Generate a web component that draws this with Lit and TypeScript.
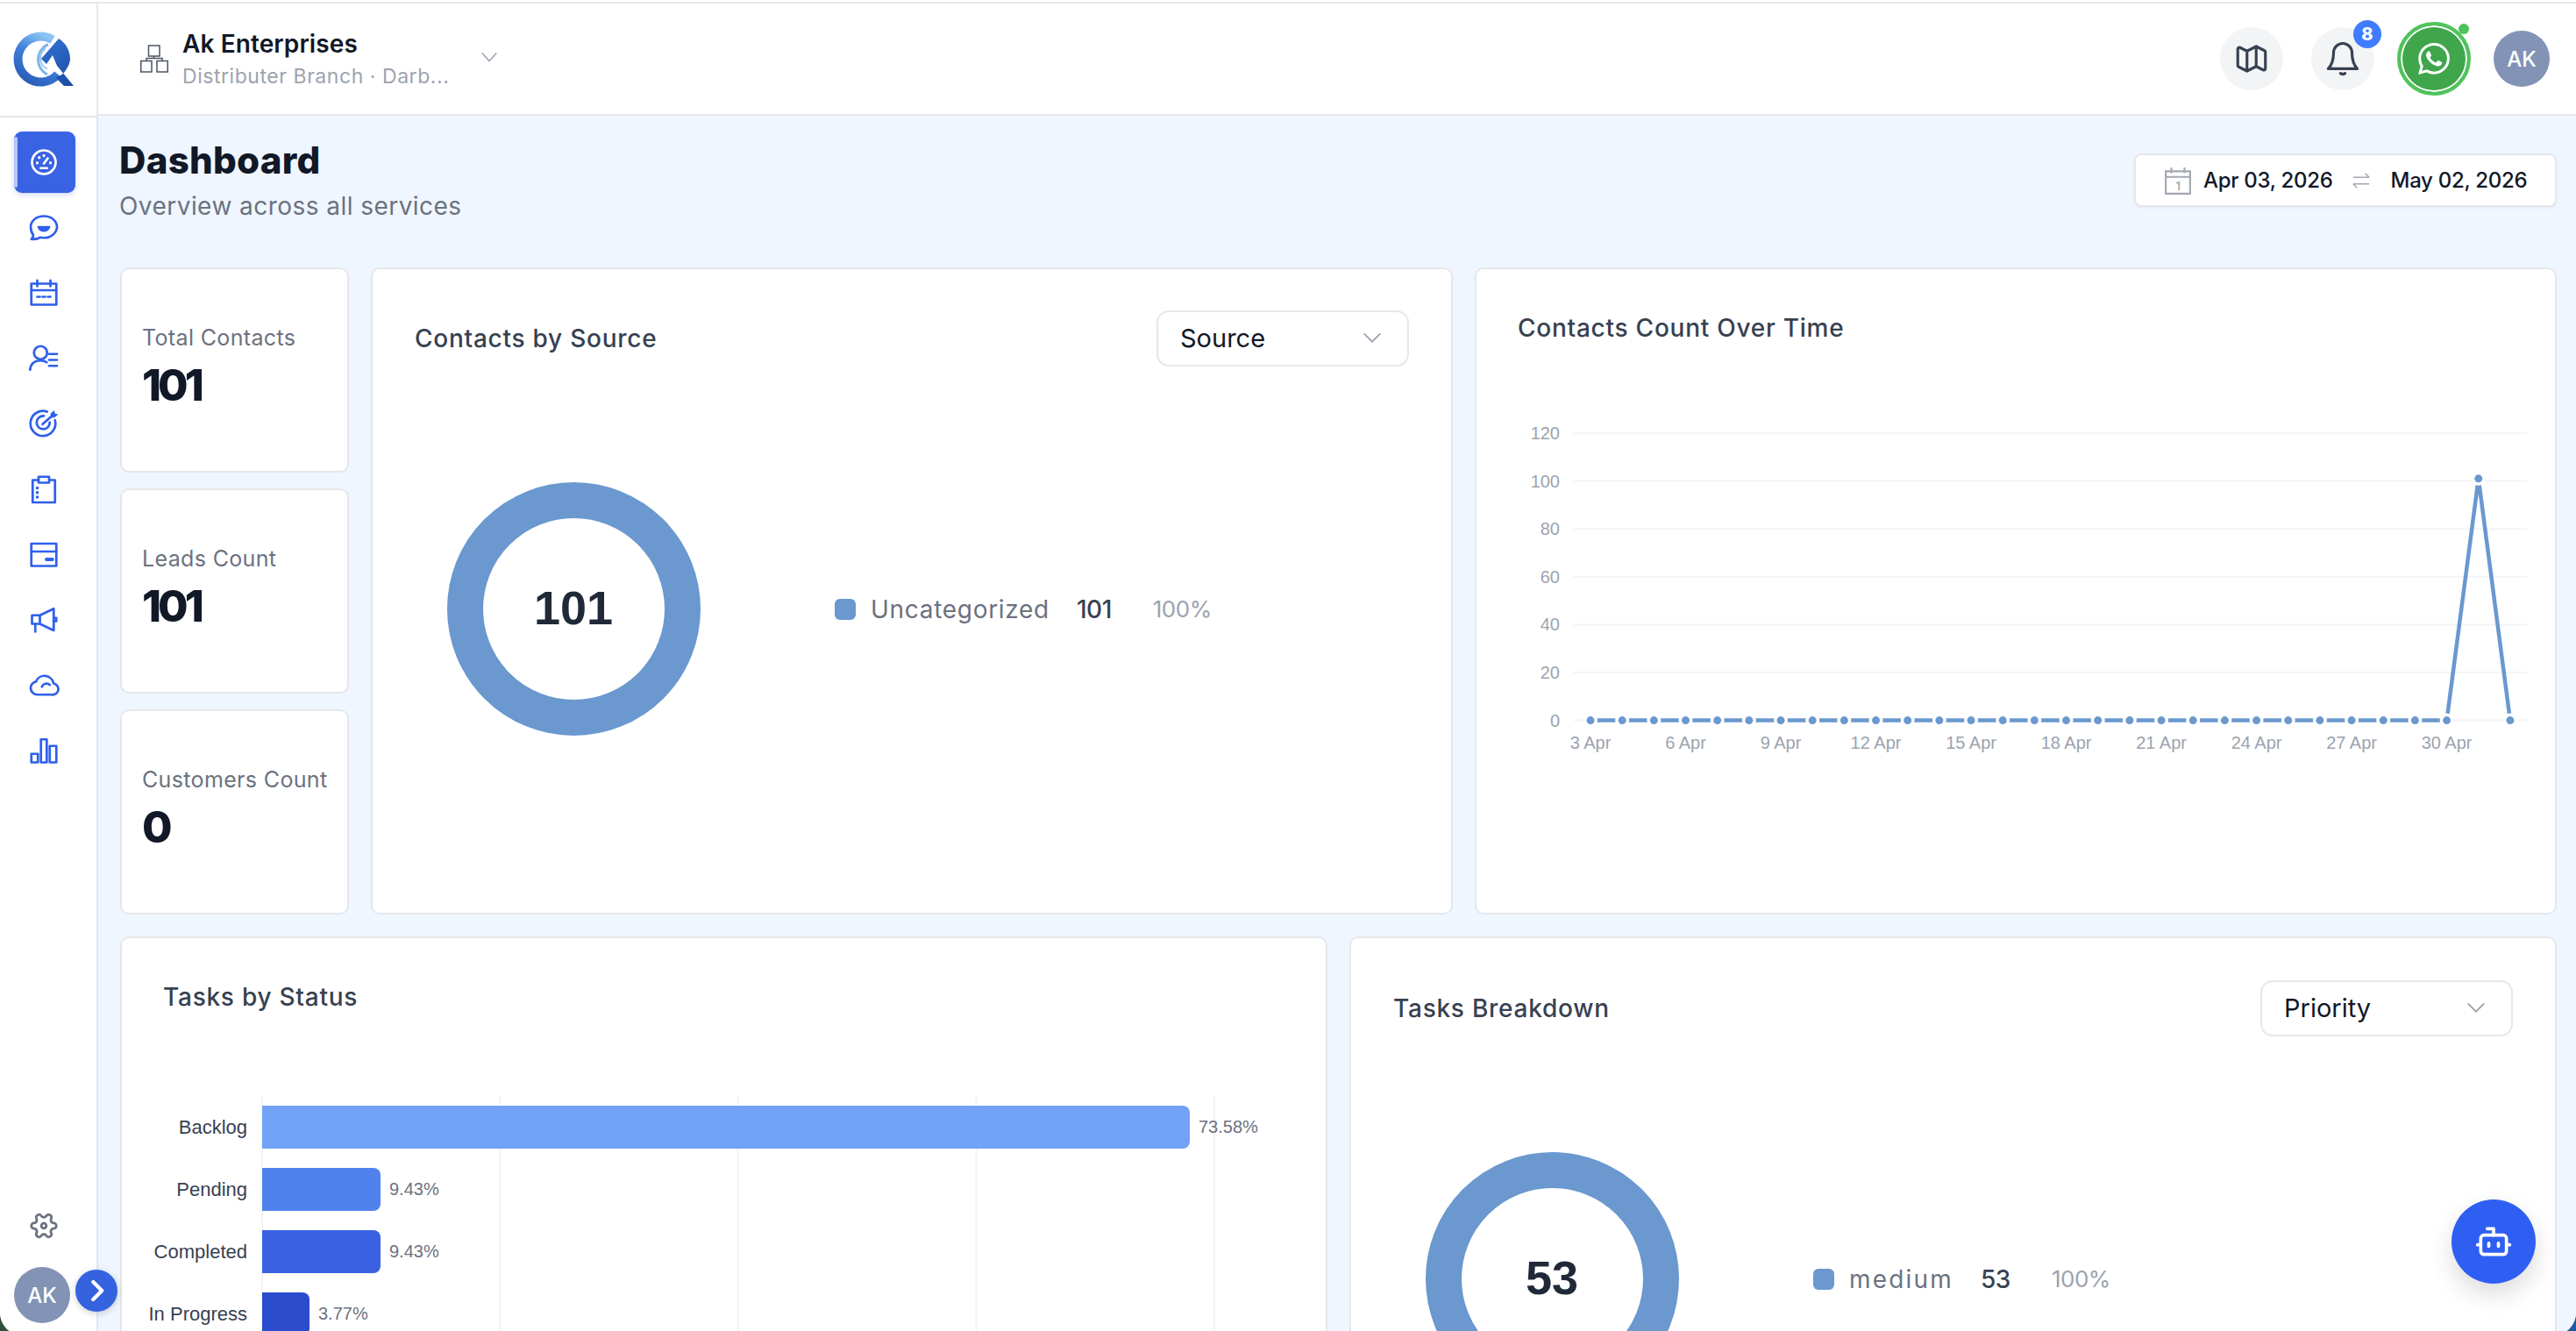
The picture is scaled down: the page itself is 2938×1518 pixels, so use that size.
import { LitElement, html, css, svg } from "lit";
import { customElement } from "lit/decorators.js";

const BLUE = "#6a98cf";
const lineData = Array.from({ length: 30 }, (_, i) => (i === 28 ? 101 : 0));
const xLabels = ["3 Apr", "6 Apr", "9 Apr", "12 Apr", "15 Apr", "18 Apr", "21 Apr", "24 Apr", "27 Apr", "30 Apr"];
const bars = [
  { label: "Backlog", value: "73.58%", end: 1218, color: "#72a2f5" },
  { label: "Pending", value: "9.43%", end: 295, color: "#5082ee" },
  { label: "Completed", value: "9.43%", end: 295, color: "#3a61e2" },
  { label: "In Progress", value: "3.77%", end: 214, color: "#2b4bcd" },
];

const navIcons = [
  svg`<circle cx="12" cy="12" r="9"/><path d="M12 13l3-4"/><path d="M7 12.5h.01M8.5 8.5h.01M12 7h.01M17 12.5h.01" stroke-width="2.2"/><path d="M9.5 16.5h5"/>`,
  svg`<path d="M12 3c5.6 0 10 3.5 10 8s-4.4 8.5-10 8.5c-1 0-2-.1-2.9-.3-1.5 1-3.6 1.5-6.6 1.3 1-.9 1.5-1.9 1.5-3C2.9 16 2 13.6 2 11c0-4.5 4.4-8 10-8z"/><path d="M7 10.5h10a5 4.5 0 0 1-10 0z" fill="currentColor" stroke="none"/>`,
  svg`<path d="M2.5 5h19v16h-19z"/><path d="M2.5 10h19M7 2.5V7M17 2.5V7"/><path d="M7 15h2M11 15h2M15 15h2"/>`,
  svg`<circle cx="9.5" cy="7.5" r="5"/><path d="M1.5 20.5c.5-4.500 3.500-7 8-7 1.800 0 3.400.5 4.600 1.300"/><path d="M16 8.500h6M16 13h6M16 17.500h6"/>`,
  svg`<path d="M20.5 9.5a9.5 9.5 0 1 1-6-6.5"/><path d="M16.5 11a5 5 0 1 1-4.500-4.700"/><path d="M11 12.500l8-7"/><path d="M17 4.500l3-2.500.5 2.500 2.500.5-3 2.500h-2.500z" fill="currentColor" stroke="none"/>`,
  svg`<path d="M3.5 5h17v17h-17z"/><path d="M8 2.5h8V7H8z" fill="#fff"/><path d="M7 11v.01M7 14.5v.01M7 18v.01" stroke-width="2.4"/>`,
  svg`<path d="M2.5 4h19v17h-19z"/><path d="M2.5 10h19"/><path d="M14 16h4.5" stroke-width="2.6"/>`,
  svg`<path d="M3 8.5h6V15H3z"/><path d="M9 8.5l10.500-5v16.500L9 15"/><path d="M5.5 15v6M19.5 10.5h2v2.500h-2"/>`,
  svg`<path d="M7 19.5a5 5 0 0 1-1-9.900 7 7 0 0 1 13.400 1.400 4.300 4.300 0 0 1-1.400 8.500z"/><path d="M10.5 13.5a3.800 3.800 0 0 1 6-1.500"/>`,
  svg`<path d="M2.5 14.5h5V21h-5zM9.8 3.5h4.400V21H9.800zM16.5 8.5h5V21h-5z"/>`,
];

@customElement("app-root")
export class AppRoot extends LitElement {
  static styles = css`
    :host {
      display: block;
      position: relative;
      height: 1518px;
      overflow: hidden;
      background: linear-gradient(90deg, #2c5239 0 50%, #1d5a9e 50%);
      font-family: Inter, "Noto Sans", sans-serif;
      color: #111827;
    }
    .shell {
      height: 1523px;
      box-sizing: border-box;
      padding-top: 2px;
      background: #fff;
      border-radius: 0 0 26px 26px;
      overflow: hidden;
      display: grid;
      grid-template-columns: 112px 1fr;
      grid-template-rows: minmax(0, 1fr);
    }

    /* sidebar */
    .side {
      position: relative;
      z-index: 2;
      display: flex;
      flex-direction: column;
      background: #fff;
      border-top: 2px solid #e5e7eb;
      border-right: 2px solid #e5e7eb;
      min-height: 0;
    }
    .logo {
      border-bottom: 2px solid #e5e7eb;
      display: flex;
      padding: 26px 0 0 10px;
      height: 102px;
    }
    .logo svg {
      width: 85px;
      height: 75px;
    }
    .nav {
      display: flex;
      flex-direction: column;
      gap: 4.5px;
      padding: 16px 0 0 16px;
    }
    .nav-item {
      width: 70px;
      height: 70px;
      box-sizing: border-box;
      padding-right: 3px;
      display: flex;
      align-items: center;
      justify-content: center;
      color: #2f5fec;
      position: relative;
      border-radius: 9px;
    }
    .nav-item.active {
      background: #3a63e4;
      color: #fff;
      box-shadow: 0 2px 6px rgba(58, 99, 228, 0.25);
    }
    .nav-item.active::before {
      content: "";
      position: absolute;
      left: 0;
      top: 6px;
      bottom: 6px;
      width: 4px;
      border-radius: 2px;
      background: #b5c6f4;
    }
    .nav-item svg {
      width: 36px;
      height: 36px;
      fill: none;
      stroke: currentColor;
      stroke-width: 1.8;
      stroke-linecap: round;
      stroke-linejoin: round;
    }
    .settings {
      margin: auto 0 30px 33px;
      width: 34px;
      height: 34px;
      fill: none;
      stroke: #6b7280;
      stroke-width: 2;
      stroke-linejoin: round;
      display: block;
      flex: none;
    }
    .avatar {
      width: 64px;
      height: 64px;
      border-radius: 50%;
      background: #8293b5;
      color: #fff;
      font-size: 24px;
      font-weight: 500;
      display: flex;
      align-items: center;
      justify-content: center;
      flex: none;
    }
    .side-foot {
      position: relative;
      padding: 0 0 14px 16px;
    }
    .expand {
      position: absolute;
      left: 86px;
      top: 3px;
      width: 48px;
      height: 48px;
      border-radius: 50%;
      background: #3563e0;
      box-shadow: 0 2px 8px rgba(0, 0, 0, 0.18);
      display: flex;
      align-items: center;
      justify-content: center;
    }
    .expand svg {
      width: 30px;
      height: 30px;
      fill: none;
      stroke: #fff;
      stroke-width: 3.4;
      stroke-linecap: round;
      stroke-linejoin: round;
    }

    /* header */
    .main {
      min-width: 0;
      min-height: 0;
      overflow: hidden;
      display: flex;
      flex-direction: column;
      background: #eff6ff;
      border-top: 2px solid #e5e7eb;
    }
    .top {
      height: 126px;
      flex: none;
      background: #fff;
      border-bottom: 2px solid #e5e7eb;
      display: flex;
      align-items: center;
      padding: 0 30px 0 48px;
    }
    .branch-icon {
      width: 32px;
      height: 32px;
      fill: none;
      stroke: #4b5563;
      stroke-width: 1.5;
    }
    .org {
      margin-left: 16px;
      padding-top: 3px;
      display: flex;
      flex-direction: column;
    }
    .org-name {
      font-size: 28px;
      line-height: 37px;
      font-weight: 600;
      color: #111827;
      letter-spacing: 0.1px;
    }
    .org-sub {
      font-size: 23px;
      line-height: 37px;
      color: #9ca3af;
      letter-spacing: 0.55px;
    }
    .org-chev {
      width: 22px;
      height: 22px;
      margin: -4px 0 0 35px;
      fill: none;
      stroke: #9ca3af;
      stroke-width: 1.6;
    }
    .top-right {
      margin-left: auto;
      display: flex;
      align-items: center;
    }
    .round {
      width: 72px;
      height: 72px;
      border-radius: 50%;
      background: #f3f4f6;
      display: flex;
      align-items: center;
      justify-content: center;
      position: relative;
    }
    .round svg {
      fill: none;
      stroke: #374151;
      stroke-width: 1.8;
      stroke-linecap: round;
      stroke-linejoin: round;
    }
    .round + .round {
      margin-left: 32px;
    }
    .badge {
      position: absolute;
      left: 48px;
      top: -8px;
      width: 32px;
      height: 32px;
      border-radius: 50%;
      background: #3f7cff;
      color: #fff;
      font-size: 20px;
      font-weight: 800;
      display: flex;
      align-items: center;
      justify-content: center;
    }
    .wa {
      margin: 0 26px;
      width: 84px;
      height: 84px;
      box-sizing: border-box;
      border-radius: 50%;
      background: #3fa64c;
      border: 4px solid #4fc35c;
      box-shadow: inset 0 0 0 2px #fff;
      position: relative;
      display: flex;
      align-items: center;
      justify-content: center;
    }
    .wa svg {
      width: 36px;
      height: 36px;
      fill: #fff;
    }
    .wa-dot {
      position: absolute;
      right: -2px;
      top: -2px;
      width: 12px;
      height: 12px;
      border-radius: 50%;
      background: #4fc35c;
    }

    /* content */
    .content {
      flex: 1;
      min-height: 0;
      padding: 0 22px 0 25px;
    }
    .head {
      height: 173px;
      display: flex;
      justify-content: space-between;
      align-items: flex-start;
    }
    h1 {
      margin: 27px 0 0 -1px;
      font-size: 42px;
      line-height: 48px;
      font-weight: 800;
      color: #111827;
      letter-spacing: 0.3px;
    }
    .subtitle {
      margin: 8px 0 0 -1px;
      font-size: 28px;
      line-height: 40px;
      color: #6b7280;
      letter-spacing: 0.45px;
    }
    .dates {
      margin-top: 43px;
      width: 482px;
      height: 61px;
      box-sizing: border-box;
      background: #fff;
      border: 2px solid #e5e7eb;
      border-radius: 8px;
      box-shadow: 0 1px 3px rgba(0, 0, 0, 0.06);
      display: flex;
      align-items: center;
      padding-left: 33px;
      font-size: 24px;
      font-weight: 500;
      letter-spacing: -0.3px;
      white-space: nowrap;
    }
    .dates .cal {
      width: 30px;
      height: 32px;
      margin-right: 14px;
      fill: none;
      stroke: #a3a8b0;
      stroke-width: 2;
      flex: none;
    }
    .dates .cal text {
      font-size: 12px;
      font-weight: 600;
      fill: #a3a8b0;
      stroke: none;
    }
    .dates .swap {
      width: 22px;
      height: 22px;
      margin: 0 23px 0 21px;
      fill: none;
      stroke: #a3a8b0;
      stroke-width: 1.6;
      flex: none;
    }
    .row1 {
      display: grid;
      grid-template-columns: 261px 1fr 1fr;
      gap: 25px;
      height: 738px;
    }
    .stats {
      display: flex;
      flex-direction: column;
      gap: 18px;
    }
    .card {
      background: #fff;
      border: 2px solid #e5e7eb;
      border-radius: 10px;
      box-sizing: border-box;
      min-width: 0;
    }
    .stat {
      flex: 1;
      display: flex;
      flex-direction: column;
      justify-content: center;
      padding: 0 0 6px 23px;
    }
    .stat-label {
      font-size: 25px;
      line-height: 32px;
      color: #6b7280;
      letter-spacing: 0.35px;
      white-space: nowrap;
    }
    .stat-value {
      font-size: 50px;
      line-height: 60px;
      font-weight: 800;
      color: #111827;
      margin-top: 8.5px;
      letter-spacing: -4px;
    }
    .row2 {
      display: grid;
      grid-template-columns: 1fr 1fr;
      gap: 25px;
      margin-top: 25px;
      height: 800px;
    }
    .pad {
      padding: 48px 48px 0;
    }
    .row1 .pad {
      padding-top: 47px;
    }
    .title {
      font-size: 28px;
      line-height: 38px;
      font-weight: 500;
      color: #374151;
      letter-spacing: 0.75px;
    }
    .bare-title {
      padding: 48px 47px 0;
    }
    .card-head {
      display: flex;
      align-items: center;
      justify-content: space-between;
    }
    .select {
      width: 288px;
      height: 64px;
      box-sizing: border-box;
      border: 2px solid #e5e7eb;
      border-radius: 14px;
      display: flex;
      align-items: center;
      justify-content: space-between;
      padding: 0 26px 2px 25px;
      font-size: 29px;
      color: #111827;
      background: #fff;
    }
    .select svg {
      width: 28px;
      height: 28px;
      fill: none;
      stroke: #9ca3af;
      stroke-width: 1.6;
    }
    .donut-row {
      display: flex;
      align-items: center;
      margin: 132px 0 0 85px;
    }
    .donut {
      width: 289px;
      height: 289px;
      flex: none;
    }
    .donut text {
      font-family: "Liberation Sans", Arial, sans-serif;
      font-size: 54px;
      font-weight: 700;
      fill: #1f2937;
      text-anchor: middle;
    }
    .legend {
      margin-left: 153px;
      display: flex;
      align-items: center;
      font-size: 28px;
      line-height: 36px;
      white-space: nowrap;
    }
    .swatch {
      width: 24px;
      height: 24px;
      border-radius: 6px;
      background: #6a98cf;
      margin-right: 17px;
    }
    .legend-name {
      color: #6b7280;
      margin-right: 31px;
      letter-spacing: 0.7px;
    }
    .legend-name.wide {
      letter-spacing: 2.2px;
    }
    .legend-num {
      color: #374151;
      font-weight: 500;
      margin-right: 47px;
      letter-spacing: -0.5px;
    }
    .legend-pct {
      color: #9ca3af;
      font-size: 26px;
      letter-spacing: -0.5px;
    }
    .chart {
      display: block;
      overflow: hidden;
    }
    .chart text {
      font-family: "Liberation Sans", Arial, sans-serif;
    }
    .fab {
      position: absolute;
      left: 2796px;
      top: 1368px;
      width: 96px;
      height: 96px;
      border-radius: 50%;
      background: #2f5ff2;
      box-shadow: 0 12px 28px rgba(0, 0, 0, 0.14);
      display: flex;
      align-items: center;
      justify-content: center;
      z-index: 3;
    }
    .fab svg {
      width: 44px;
      height: 44px;
      fill: none;
      stroke: #fff;
      stroke-width: 2;
      stroke-linecap: round;
      stroke-linejoin: round;
    }
  `;

  private lineChart() {
    const xAt = (i: number) => 130 + i * 36.17;
    const yAt = (v: number) => 342.6 - (v / 120) * 327.6;
    const pts = lineData.map((v, i) => `${xAt(i)},${yAt(v)}`).join(" ");
    const ticks = [0, 20, 40, 60, 80, 100, 120];
    return html`<svg class="chart" style="margin-top:86px" width="1229" height="400">
      ${ticks.map(
        (t) => svg`
          <line x1="111" x2="1198" y1=${yAt(t)} y2=${yAt(t)} stroke="#f3f4f6" stroke-width="2"/>
          <text x="95" y=${yAt(t) + 7} text-anchor="end" font-size="20" fill="#9ca3af">${t}</text>`
      )}
      <polyline points=${pts} fill="none" stroke=${BLUE} stroke-width="4.5"/>
      ${lineData.map(
        (v, i) => svg`<circle cx=${xAt(i)} cy=${yAt(v)} r="4.5" fill=${BLUE} stroke="#fff" stroke-width="7" paint-order="stroke"/>`
      )}
      ${xLabels.map(
        (l, i) => svg`<text x=${xAt(i * 3)} y="375" text-anchor="middle" font-size="20" fill="#9ca3af">${l}</text>`
      )}
    </svg>`;
  }

  private barChart() {
    const x0 = 160;
    const rowY = (i: number) => 11 + i * 71;
    return html`<svg class="chart" style="margin-top:94px" width="1372" height="400">
      ${[0, 1, 2, 3, 4].map(
        (i) => svg`<line x1=${x0 + i * 271.5} x2=${x0 + i * 271.5} y1="0" y2="400" stroke="#f3f4f6" stroke-width="2"/>`
      )}
      ${bars.map((b, i) => {
        const y = rowY(i);
        return svg`
          <text x="143" y=${y + 32} text-anchor="end" font-size="22" fill="#374151">${b.label}</text>
          <path d="M${x0} ${y}H${b.end - 8}a8 8 0 0 1 8 8V${y + 41}a8 8 0 0 1-8 8H${x0}z" fill=${b.color}/>
          <text x=${b.end + 10} y=${y + 31} font-size="20" fill="#6b7280">${b.value}</text>`;
      })}
    </svg>`;
  }

  private donut(total: string) {
    return html`<svg class="donut" viewBox="0 0 289 289">
      <circle cx="144.5" cy="144.5" r="124" fill="none" stroke=${BLUE} stroke-width="41"/>
      <text x="144" y="162">${total}</text>
    </svg>`;
  }

  private select(label: string) {
    return html`<div class="select">
      <span>${label}</span>
      <svg viewBox="0 0 24 24"><path d="M4 8l8 8 8-8"/></svg>
    </div>`;
  }

  private legend(name: string, num: string, wide = false) {
    return html`<div class="legend">
      <span class="swatch"></span>
      <span class="legend-name ${wide ? "wide" : ""}">${name}</span>
      <span class="legend-num">${num}</span>
      <span class="legend-pct">100%</span>
    </div>`;
  }

  render() {
    return html`<div class="shell">
        <aside class="side">
          <div class="logo">
            <svg viewBox="0 0 85 75">
              <defs>
                <linearGradient id="lg" x1="0.7" y1="0" x2="0.2" y2="1">
                  <stop offset="0" stop-color="#8cc4f4" />
                  <stop offset="0.45" stop-color="#3f7fdc" />
                  <stop offset="1" stop-color="#2a5cb8" />
                </linearGradient>
                <linearGradient id="la" x1="0.3" y1="0" x2="0.7" y2="1">
                  <stop offset="0" stop-color="#2f6fd0" />
                  <stop offset="1" stop-color="#1f4ea6" />
                </linearGradient>
              </defs>
              <path d="M50 15.3A26 26 0 1 0 56 54.8" fill="none" stroke="url(#lg)" stroke-width="10" />
              <path d="M45 20.5A19 19 0 0 0 44 55" fill="none" stroke="#7fb4ea" stroke-width="3" />
              <path d="M42 25.2A13.5 13.5 0 0 0 44 48.7" fill="none" stroke="#9cc6ee" stroke-width="2" />
              <path d="M57 14L37 37l6 6 7-10 5 12 19 23H63L53 58c5-1 9-3 12-8 3-4 5-9 5-13 0-9-5-18-13-23z" fill="url(#la)" />
            </svg>
          </div>
          <nav class="nav">
            ${navIcons.map(
              (ic, i) => html`<div class="nav-item ${i === 0 ? "active" : ""}">
                <svg viewBox="0 0 24 24">${ic}</svg>
              </div>`
            )}
          </nav>
          <svg class="settings" viewBox="0 0 24 24">
            <path transform="rotate(90 12 12)" d="M12.22 2h-.44a2 2 0 0 0-2 2v.18a2 2 0 0 1-1 1.73l-.43.25a2 2 0 0 1-2 0l-.15-.08a2 2 0 0 0-2.73.73l-.22.38a2 2 0 0 0 .73 2.73l.15.1a2 2 0 0 1 1 1.72v.51a2 2 0 0 1-1 1.74l-.15.09a2 2 0 0 0-.73 2.73l.22.38a2 2 0 0 0 2.73.73l.15-.08a2 2 0 0 1 2 0l.43.25a2 2 0 0 1 1 1.73V20a2 2 0 0 0 2 2h.44a2 2 0 0 0 2-2v-.18a2 2 0 0 1 1-1.73l.43-.25a2 2 0 0 1 2 0l.15.08a2 2 0 0 0 2.73-.73l.22-.39a2 2 0 0 0-.73-2.73l-.15-.08a2 2 0 0 1-1-1.74v-.5a2 2 0 0 1 1-1.74l.15-.09a2 2 0 0 0 .73-2.73l-.22-.38a2 2 0 0 0-2.73-.73l-.15.08a2 2 0 0 1-2 0l-.43-.25a2 2 0 0 1-1-1.73V4a2 2 0 0 0-2-2z" />
            <circle cx="12" cy="12" r="2" />
          </svg>
          <div class="side-foot">
            <div class="avatar">AK</div>
            <div class="expand">
              <svg viewBox="0 0 24 24"><path d="M9 4l8 8-8 8" /></svg>
            </div>
          </div>
        </aside>

        <div class="main">
          <header class="top">
            <svg class="branch-icon" viewBox="0 0 32 32">
              <path d="M9.5 1H22v12H9.5zM.75 18.5H13V31H.75zM19 18.5h12.25V31H19zM15.5 13v3M7 18.5v-3h18v3" />
            </svg>
            <div class="org">
              <span class="org-name">Ak Enterprises</span>
              <span class="org-sub">Distributer Branch · Darb...</span>
            </div>
            <svg class="org-chev" viewBox="0 0 24 24"><path d="M3 7l9 10 9-10" /></svg>
            <div class="top-right">
              <div class="round">
                <svg width="42" height="42" viewBox="0 0 24 24">
                  <path d="M9 20l-5.447-2.724A1 1 0 013 16.382V5.618a1 1 0 011.447-.894L9 7m0 13l6-3m-6 3V7m6 10l4.553 2.276A1 1 0 0021 18.382V7.618a1 1 0 00-.553-.894L15 4m0 13V4m0 0L9 7" />
                </svg>
              </div>
              <div class="round">
                <svg width="42" height="42" viewBox="0 0 24 24">
                  <path d="M6 8a6 6 0 0 1 12 0c0 6 1.5 8.5 3.5 10.5h-19C4.5 16.5 6 14 6 8z" />
                  <path d="M10.5 21.5c.8.6 2.2.6 3 0" />
                </svg>
                <span class="badge">8</span>
              </div>
              <div class="wa">
                <svg viewBox="0 0 24 24">
                  <path d="M17.472 14.382c-.297-.149-1.758-.867-2.03-.967-.273-.099-.471-.148-.67.15-.197.297-.767.966-.94 1.164-.173.199-.347.223-.644.075-.297-.15-1.255-.463-2.39-1.475-.883-.788-1.48-1.761-1.653-2.059-.173-.297-.018-.458.13-.606.134-.133.298-.347.446-.52.149-.174.198-.298.298-.497.099-.198.05-.371-.025-.52-.075-.149-.669-1.612-.916-2.207-.242-.579-.487-.5-.669-.51-.173-.008-.371-.01-.57-.01-.198 0-.52.074-.792.372-.272.297-1.04 1.016-1.04 2.479 0 1.462 1.065 2.875 1.213 3.074.149.198 2.096 3.2 5.077 4.487.709.306 1.262.489 1.694.625.712.227 1.36.195 1.871.118.571-.085 1.758-.719 2.006-1.413.248-.694.248-1.289.173-1.413-.074-.124-.272-.198-.57-.347m-5.421 7.403h-.004a9.87 9.87 0 01-5.031-1.378l-.361-.214-3.741.982.998-3.648-.235-.374a9.86 9.86 0 01-1.51-5.26c.001-5.45 4.436-9.884 9.888-9.884 2.64 0 5.122 1.03 6.988 2.898a9.825 9.825 0 012.893 6.994c-.003 5.45-4.437 9.884-9.885 9.884m8.413-18.297A11.815 11.815 0 0012.05 0C5.495 0 .16 5.335.157 11.892c0 2.096.547 4.142 1.588 5.945L.057 24l6.305-1.654a11.882 11.882 0 005.683 1.448h.005c6.554 0 11.89-5.335 11.893-11.893a11.821 11.821 0 00-3.48-8.413z" />
                </svg>
                <span class="wa-dot"></span>
              </div>
              <div class="avatar">AK</div>
            </div>
          </header>

          <div class="content">
            <div class="head">
              <div>
                <h1>Dashboard</h1>
                <div class="subtitle">Overview across all services</div>
              </div>
              <div class="dates">
                <svg class="cal" viewBox="0 0 28 30">
                  <path d="M1 5h26v24H1zM1 11h26M7 1v6M21 1v6" />
                  <text x="14" y="25" text-anchor="middle">1</text>
                </svg>
                <span>Apr 03, 2026</span>
                <svg class="swap" viewBox="0 0 24 24"><path d="M2 8h20M17 3l5 5M22 16H2M7 21l-5-5" /></svg>
                <span>May 02, 2026</span>
              </div>
            </div>

            <div class="row1">
              <div class="stats">
                <div class="card stat"><div class="stat-label">Total Contacts</div><div class="stat-value">101</div></div>
                <div class="card stat"><div class="stat-label">Leads Count</div><div class="stat-value">101</div></div>
                <div class="card stat"><div class="stat-label">Customers Count</div><div class="stat-value">0</div></div>
              </div>
              <div class="card">
                <div class="pad card-head"><span class="title">Contacts by Source</span>${this.select("Source")}</div>
                <div class="donut-row">${this.donut("101")}${this.legend("Uncategorized", "101")}</div>
              </div>
              <div class="card">
                <div class="bare-title title">Contacts Count Over Time</div>
                ${this.lineChart()}
              </div>
            </div>

            <div class="row2">
              <div class="card">
                <div class="bare-title title">Tasks by Status</div>
                ${this.barChart()}
              </div>
              <div class="card">
                <div class="pad card-head"><span class="title">Tasks Breakdown</span>${this.select("Priority")}</div>
                <div class="donut-row">${this.donut("53")}${this.legend("medium", "53", true)}</div>
              </div>
            </div>
          </div>
        </div>
      </div>
      <div class="fab">
        <svg viewBox="0 0 24 24">
          <path d="M12 8V4H8" />
          <rect x="4" y="8" width="16" height="12" rx="2" />
          <path d="M2 14h2M20 14h2M15 13v2M9 13v2" />
        </svg>
      </div>`;
  }
}
